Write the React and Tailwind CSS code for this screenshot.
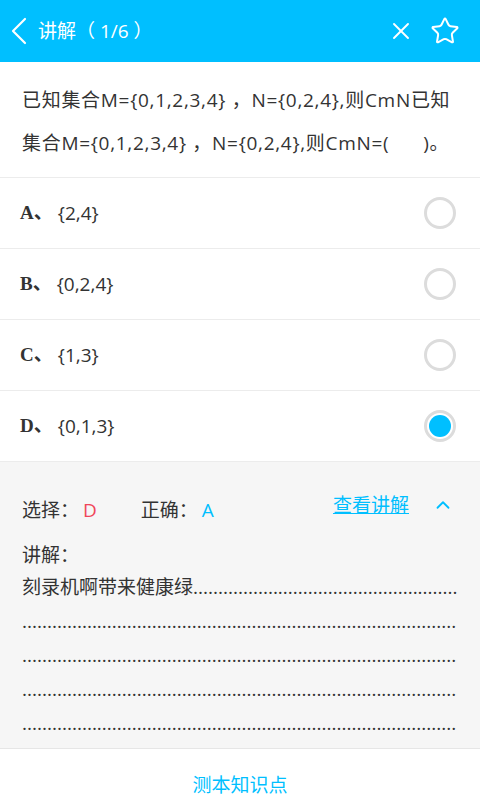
import React from 'react';
import { X, Star, ChevronUp } from 'lucide-react';

const font = { fontFamily: '"Open Sans", "Noto Sans CJK SC", sans-serif' };

const options = [
  { key: 'A', text: '{2,4}' },
  { key: 'B', text: '{0,2,4}' },
  { key: 'C', text: '{1,3}' },
  { key: 'D', text: '{0,1,3}', checked: true },
];

const dots = '.'.repeat(87);

const App = () => {
  return (
    <div className="w-[480px] h-[800px] bg-white flex flex-col overflow-hidden" style={font}>
      {/* Header */}
      <div className="h-[62px] bg-[#00bfff] flex items-center pl-[10px] pr-[20px] text-white shrink-0">
        <svg width="18" height="28" viewBox="0 0 18 28" className="mr-[10px]">
          <polyline points="15,2 3,14 15,26" fill="none" stroke="white" strokeWidth="2.2" strokeLinecap="round" strokeLinejoin="round" />
        </svg>
        <span className="text-[19px] leading-none">讲解（ 1/6 ）</span>
        <div className="flex-1" />
        <X className="w-[28px] h-[28px] mr-[15px]" strokeWidth={1.6} />
        <Star className="w-[30px] h-[30px]" strokeWidth={1.6} />
      </div>

      {/* Question */}
      <div className="px-[22px] pt-[17px] pb-[12px] text-[19px] leading-[43px] tracking-[0.7px] text-[#333] border-b border-[#ececec]">
        已知集合M={'{'}0,1,2,3,4{'}'} ，N={'{'}0,2,4{'}'},则CmN已知集合M={'{'}0,1,2,3,4{'}'} ，N={'{'}0,2,4{'}'},则CmN=(&nbsp;&nbsp;&nbsp;&nbsp;&nbsp;&nbsp;)。
      </div>

      {/* Options */}
      {options.map((o) => (
        <div key={o.key} className="h-[71px] flex items-center pl-[20px] pr-[24px] border-b border-[#ececec] shrink-0">
          <span className="text-[19px] font-bold text-[#333]" style={{ fontFamily: '"Liberation Serif", "Noto Sans CJK SC", serif' }}>{o.key}、</span>
          <span className="text-[19px] text-[#333] ml-[5px]">{o.text}</span>
          <div className="flex-1" />
          <div className="w-[32px] h-[32px] rounded-full border-[3px] border-[#dcdcdc] flex items-center justify-center">
            {o.checked && <div className="w-[22px] h-[22px] rounded-full bg-[#00bfff]" />}
          </div>
        </div>
      ))}

      {/* Answer area */}
      <div className="bg-[#f6f6f6] flex-1 px-[22px] pt-[29px] border-b border-[#e6e6e6] text-[#333]">
        <div className="flex items-center text-[19px]">
          <span>选择：</span>
          <span className="text-[#f0465a] ml-[4px]">D</span>
          <span className="ml-[44px]">正确：</span>
          <span className="text-[#00bfff] ml-[4px]">A</span>
          <div className="flex-1" />
          <span className="text-[#00bfff] underline mb-[10px] mr-[23px]">查看讲解</span>
          <ChevronUp className="w-[22px] h-[22px] text-[#00bfff] mb-[10px] mr-[4px]" strokeWidth={2} />
        </div>
        <div className="text-[19px] mt-[10px] leading-[30px]">讲解：</div>
        <div className="text-[19px] leading-[34px] whitespace-nowrap overflow-hidden">刻录机啊带来健康绿{'.'.repeat(53)}</div>
        {[0, 1, 2, 3].map((i) => (
          <div key={i} className="text-[19px] leading-[34px] whitespace-nowrap overflow-hidden">{dots}</div>
        ))}
      </div>

      {/* Footer */}
      <div className="h-[51px] shrink-0 flex justify-center pt-[25px] text-[19px] leading-[22px] text-[#00bfff]">
        测本知识点
      </div>
    </div>
  );
};

export default App;
